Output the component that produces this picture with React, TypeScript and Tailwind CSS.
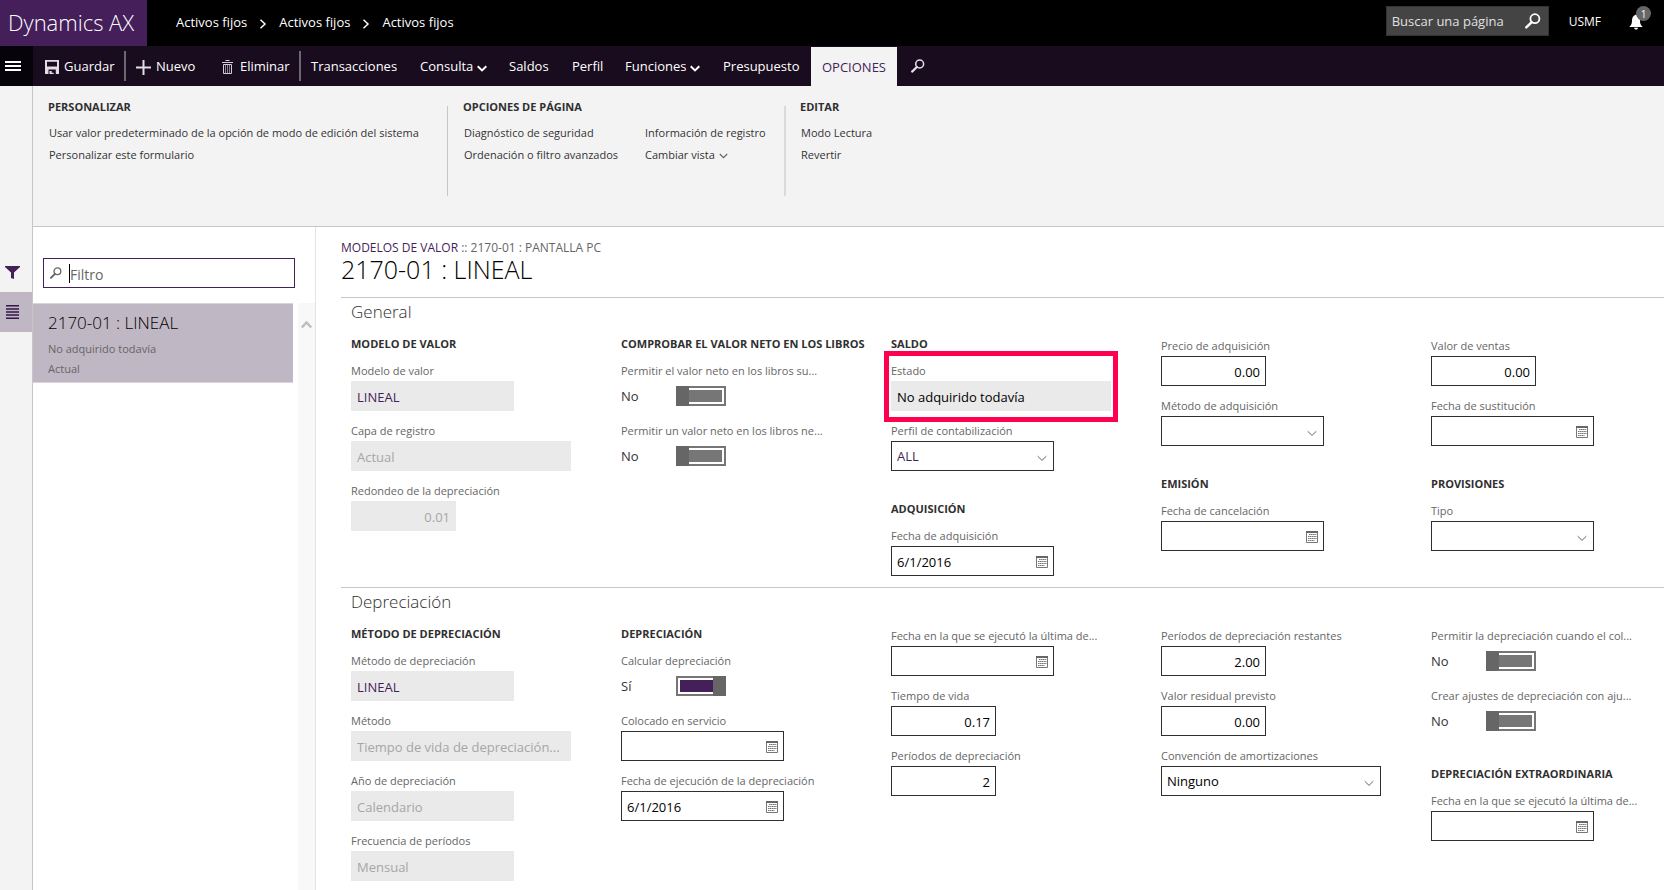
import { useId, useState, type ReactNode } from 'react';

const TITLE = '2170-01 : LINEAL';

/* ---------- icons ---------- */

function SearchIcon({ className = '' }: { className?: string }) {
  return (
    <svg viewBox="0 0 16 16" className={className} fill="none" stroke="currentColor" aria-hidden="true">
      <circle cx="9.9" cy="5.7" r="4.5" strokeWidth="1.8" />
      <path d="M6.7 9.2 1.3 14.4" strokeWidth="2.5" strokeLinecap="round" />
    </svg>
  );
}

function ChevronDown({ className = '', weight = 1 }: { className?: string; weight?: number }) {
  return (
    <svg viewBox="0 0 10 7" className={className} fill="none" stroke="currentColor" strokeWidth={weight} aria-hidden="true">
      <path d="M.7 1.2 5 5.4l4.3-4.2" />
    </svg>
  );
}

function CrumbChevron() {
  return (
    <svg viewBox="0 0 8 10" className="mt-0.5 h-[10px] w-2 shrink-0" fill="none" stroke="#fff" strokeWidth="1.5" aria-hidden="true">
      <path d="M1.5.8 6 5 1.5 9.2" />
    </svg>
  );
}

function CalendarIcon() {
  return (
    <svg viewBox="0 0 12 12" className="h-3 w-3" aria-hidden="true">
      <path d="M.5 1.5h11v10H.5z" fill="none" stroke="#767676" />
      <path d="M0 0h12v2H0z" fill="#666" />
      <path d="M3 3.5h7.500M2 5.500h8.500M2 7.500h8.500M2 9.500h6.500" stroke="#767676" strokeDasharray="1.500 .3" />
    </svg>
  );
}

function SaveIcon() {
  return (
    <svg viewBox="0 0 14 14" className="h-[14px] w-[14px]" aria-hidden="true">
      <path fillRule="evenodd" fill="#e3dde6" d="M0 0h14v14h-3.200V9.500H3.500V14H0zM2 1.800v4.700h10V1.800z" />
      <path d="M4.500 11h2.200v1.700h2V14H4.500z" fill="#e3dde6" />
    </svg>
  );
}

function PlusIcon() {
  return (
    <svg viewBox="0 0 15 15" className="h-[15px] w-[15px]" fill="none" stroke="#e3dde6" strokeWidth="2" aria-hidden="true">
      <path d="M7.5 0v15M0 7.5h15" />
    </svg>
  );
}

function TrashIcon() {
  return (
    <svg viewBox="0 0 11 14" className="mx-px h-[14px] w-[11px]" fill="none" stroke="#d5cdd9" aria-hidden="true">
      <path d="M3.500 .5h4M0 2.500h11M1.500 4.500h8v9h-8z" />
      <path d="M3.500 5v8M5.500 5v8M7.500 5v8" stroke="#8d8294" />
    </svg>
  );
}

function BellIcon() {
  return (
    <svg viewBox="0 0 14 16" className="h-4 w-[14px]" fill="#fff" aria-hidden="true">
      <path d="M7 .5C4.2 1.400 3 3.600 3 6.500c0 3.200-.8 4.900-2.800 6.500h13.600c-2-1.600-2.800-3.300-2.800-6.500C11 3.600 9.800 1.400 7 .5zM5 13.800h4.200c-.3 1.100-1.100 1.800-2.100 1.800S5.300 14.900 5 13.800z" />
    </svg>
  );
}

/* ---------- form parts ---------- */

type Size = 'sm' | 'md' | 'lg';

const widths: Record<Size, string> = {
  sm: 'w-[105px]',
  md: 'w-[163px]',
  lg: 'w-[220px]',
};

const frame = 'h-[30px] border border-[#2f2f2f] bg-white';

function Label({ id, children }: { id: string; children: ReactNode }) {
  return (
    <label htmlFor={id} className="block h-5 whitespace-nowrap text-[11px] leading-5 text-[#666]">
      {children}
    </label>
  );
}

interface FieldProps {
  label: string;
  value?: string;
  size?: Size;
  link?: boolean;
}

function ReadOnlyField({ label, value, size = 'md', link, right, strong }: FieldProps & { right?: boolean; strong?: boolean }) {
  const id = useId();
  const color = link ? 'text-[#441f5a]' : strong ? 'text-black' : 'text-[#a6a6a6]';
  return (
    <div>
      <Label id={id}>{label}</Label>
      <input
        id={id}
        readOnly
        value={value}
        className={`block h-[30px] bg-[#eaeaea] px-1.5 pt-0.5 text-[13px] outline-none ${widths[size]} ${color} ${right ? 'text-right' : ''}`}
      />
    </div>
  );
}

function NumberField({ label, value }: FieldProps) {
  const id = useId();
  return (
    <div>
      <Label id={id}>{label}</Label>
      <input
        id={id}
        defaultValue={value}
        inputMode="decimal"
        className={`block px-[5px] pt-0.5 text-right text-[13px] text-black outline-none ${frame} ${widths.sm}`}
      />
    </div>
  );
}

function DateField({ label, value = '' }: FieldProps) {
  const id = useId();
  return (
    <div>
      <Label id={id}>{label}</Label>
      <div className={`flex items-center ${frame} ${widths.md}`}>
        <input
          id={id}
          defaultValue={value}
          className="h-full min-w-0 flex-1 px-[5px] pt-0.5 text-[13px] text-black outline-none"
        />
        <button type="button" aria-label="Calendario" className="px-[5px] pt-0.5">
          <CalendarIcon />
        </button>
      </div>
    </div>
  );
}

function SelectField({ label, value = '', size = 'md', link }: FieldProps) {
  const id = useId();
  return (
    <div>
      <Label id={id}>{label}</Label>
      <div className={`relative ${widths[size]}`}>
        <select
          id={id}
          defaultValue={value}
          className={`block w-full appearance-none px-[5px] pt-0.5 text-[13px] outline-none ${frame} ${link ? 'text-[#441f5a]' : 'text-black'}`}
        >
          <option value={value}>{value}</option>
        </select>
        <ChevronDown className="pointer-events-none absolute right-[7px] top-[14px] h-[7px] w-[10px] text-[#666]" />
      </div>
    </div>
  );
}

function Toggle({ label, on = false }: { label: string; on?: boolean }) {
  const id = useId();
  const [checked, setChecked] = useState(on);
  return (
    <div className="h-[50px]">
      <Label id={id}>{label}</Label>
      <div className="flex h-[30px] items-center">
        <span className="w-[55px] pt-0.5 text-[13px] text-[#333]">{checked ? 'Sí' : 'No'}</span>
        <span className="relative flex">
          <input
            id={id}
            type="checkbox"
            role="switch"
            checked={checked}
            onChange={e => setChecked(e.target.checked)}
            className="h-5 w-[50px] appearance-none border-2 border-[#767676] bg-[#767676] bg-clip-content p-0.5 checked:bg-[#441f5a]"
          />
          <span
            className={`pointer-events-none absolute top-0 h-5 w-[13px] bg-[#666] ${checked ? 'right-0' : 'left-0'}`}
          />
        </span>
      </div>
    </div>
  );
}

function Column({ children }: { children: ReactNode }) {
  return <div className="flex w-[220px] flex-col gap-[30px]">{children}</div>;
}

function Group({ title, children }: { title?: string; children: ReactNode }) {
  return (
    <div>
      {title && (
        <h3 className="mb-[9px] whitespace-nowrap text-[11px] font-bold leading-4 text-[#2f2f2f]">{title}</h3>
      )}
      <div className="flex flex-col gap-[10px]">{children}</div>
    </div>
  );
}

function Section({ title, children }: { title: string; children: ReactNode }) {
  return (
    <section className="border-t border-[#c6c6c6] pl-[10px]">
      <h2 className="mb-[10px] text-[17px] font-light leading-7 text-[#2f2f2f]">{title}</h2>
      <div className="flex flex-wrap gap-x-[50px] gap-y-[30px] pb-[11px]">{children}</div>
    </section>
  );
}

/* ---------- page chrome ---------- */

function TopBar() {
  return (
    <header className="flex h-[46px] bg-black text-white">
      <a href="#inicio" className="flex w-[147px] shrink-0 items-center bg-[#441f5a] pb-0.5 pl-2 text-[22px] font-light">
        Dynamics AX
      </a>
      <nav aria-label="Ruta" className="flex items-center gap-3 whitespace-nowrap pl-[29px] text-[13px]">
        <a href="#modulo">Activos fijos</a>
        <CrumbChevron />
        <a href="#area">Activos fijos</a>
        <CrumbChevron />
        <a href="#pagina">Activos fijos</a>
      </nav>
      <div className="ml-auto flex items-start pr-[13px] pt-1.5">
        <div className="flex h-[30px] w-[163px] items-center border border-[#333] bg-[#444] pr-[7px]">
          <input
            aria-label="Buscar una página"
            placeholder="Buscar una página"
            className="min-w-0 flex-1 pl-[5px] pt-0.5 text-[13px] outline-none placeholder:text-[#e0e0e0]"
          />
          <button type="button" aria-label="Buscar">
            <SearchIcon className="h-4 w-4" />
          </button>
        </div>
        <button type="button" className="ml-5 h-8 text-[12px]">USMF</button>
        <button type="button" aria-label="Notificaciones" className="relative ml-7 mt-2 w-[22px]">
          <BellIcon />
          <span className="absolute -top-2 left-[7px] flex h-[15px] w-[15px] items-center justify-center rounded-full bg-[#666] text-[10px] leading-none">
            1
          </span>
        </button>
      </div>
    </header>
  );
}

function Separator() {
  return <span className="h-[30px] w-[2px] shrink-0 bg-[#6e6672]" />;
}

function ActionBar() {
  return (
    <div className="flex h-10 bg-[#190c1e] text-[13px] text-white">
      <button type="button" aria-label="Menú" className="flex w-[33px] shrink-0 flex-col justify-center gap-[2px] bg-[#07030a] pl-[5px]">
        <span className="h-[2px] w-4 bg-white" />
        <span className="h-[2px] w-4 bg-white" />
        <span className="h-[2px] w-4 bg-white" />
      </button>
      <div className="flex items-center whitespace-nowrap pl-3">
        <button type="button" className="flex w-[79px] items-center gap-[5px] pt-0.5">
          <SaveIcon />
          Guardar
        </button>
        <Separator />
        <button type="button" className="flex w-[95px] items-center gap-[5px] pl-[10px] pt-0.5">
          <PlusIcon />
          Nuevo
        </button>
        <button type="button" className="flex w-[78px] items-center gap-1.5 pt-0.5">
          <TrashIcon />
          Eliminar
        </button>
        <Separator />
        <button type="button" className="w-[119px] pl-[10px] pt-0.5 text-left">Transacciones</button>
        <button type="button" className="flex w-[89px] items-center gap-1 pt-0.5">
          Consulta
          <ChevronDown weight={2} className="mt-0.5 h-[7px] w-[10px]" />
        </button>
        <button type="button" className="w-[63px] pt-0.5 text-left">Saldos</button>
        <button type="button" className="w-[53px] pt-0.5 text-left">Perfil</button>
        <button type="button" className="flex w-[98px] items-center gap-1 pt-0.5">
          Funciones
          <ChevronDown weight={2} className="mt-0.5 h-[7px] w-[10px]" />
        </button>
        <button type="button" className="w-[88px] pt-0.5 text-left">Presupuesto</button>
        <button type="button" className="mt-px flex h-[39px] w-[86px] items-center justify-center bg-[#f3f3f3] pt-0.5 text-[#441f5a]">
          OPCIONES
        </button>
        <button type="button" aria-label="Buscar acción" className="pl-[14px]">
          <SearchIcon className="h-[14px] w-[14px] text-[#e3dde6]" />
        </button>
      </div>
    </div>
  );
}

function RibbonGroup({ title, children }: { title: string; children: ReactNode }) {
  return (
    <div>
      <h2 className="mb-[7px] text-[11px] font-bold leading-4 text-[#2f2f2f]">{title}</h2>
      <div className="flex gap-x-[22px] pl-px">{children}</div>
    </div>
  );
}

function Ribbon() {
  const col = 'flex min-w-[159px] flex-col items-start text-[11px] leading-[22px]';
  return (
    <div className="flex h-[141px] whitespace-nowrap border-b border-[#c6c6c6] bg-[#f3f3f3] pl-[15px] pt-[13px] text-[#333]">
      <div className="w-[399px]">
        <RibbonGroup title="PERSONALIZAR">
          <div className={col}>
            <button type="button">Usar valor predeterminado de la opción de modo de edición del sistema</button>
            <button type="button">Personalizar este formulario</button>
          </div>
        </RibbonGroup>
      </div>
      <div className="mt-[7px] h-[90px] w-px bg-[#c6c6c6]" />
      <div className="w-[336px] pl-[15px]">
        <RibbonGroup title="OPCIONES DE PÁGINA">
          <div className={col}>
            <button type="button">Diagnóstico de seguridad</button>
            <button type="button">Ordenación o filtro avanzados</button>
          </div>
          <div className={col}>
            <button type="button">Información de registro</button>
            <button type="button" className="flex items-center gap-1">
              Cambiar vista
              <ChevronDown weight={1.4} className="mt-0.5 h-[6px] w-[9px] text-[#666]" />
            </button>
          </div>
        </RibbonGroup>
      </div>
      <div className="mt-[7px] h-[90px] w-[2px] bg-[#dadada]" />
      <div className="pl-[14px]">
        <RibbonGroup title="EDITAR">
          <div className={col}>
            <button type="button">Modo Lectura</button>
            <button type="button">Revertir</button>
          </div>
        </RibbonGroup>
      </div>
    </div>
  );
}

function Rail() {
  return (
    <div className="w-[33px] shrink-0 border-r border-[#c6c6c6] bg-[#f3f3f3] pt-[170px]">
      <button type="button" aria-label="Filtro" className="flex h-9 w-full items-start pl-[5px] pt-[10px]">
        <svg viewBox="0 0 15 13" className="h-[13px] w-[15px]" fill="#441f5a" aria-hidden="true">
          <path d="M0 0h15v1L9 6.500V13L6 12V6.500L0 1z" />
        </svg>
      </button>
      <button type="button" aria-label="Lista" className="flex h-10 w-full items-center bg-[#c0b7c4] pl-1.5">
        <svg viewBox="0 0 13 14" className="h-[14px] w-[13px]" stroke="#32164a" strokeWidth="1.5" aria-hidden="true">
          <path d="M0 .8h13M0 3.900h13M0 7h13M0 10.100h13M0 13.200h13" />
        </svg>
      </button>
    </div>
  );
}

function ListPanel() {
  return (
    <aside className="flex w-[283px] shrink-0 flex-col border-r border-[#e4e4e4]">
      <div className="ml-[10px] mr-5 mt-[31px] flex h-[30px] items-center border border-[#441f5a] pl-1.5">
        <SearchIcon className="h-3 w-3 text-[#666]" />
        <span className="ml-[7px] h-[19px] w-px bg-black" />
        <input aria-label="Filtro" placeholder="Filtro" className="min-w-0 flex-1 pt-0.5 text-[14px] outline-none placeholder:text-[#666]" />
      </div>
      <div className="mt-[15px] flex flex-1">
        <div className="mr-[5px] flex-1">
          <a href="#registro" className="block h-20 border-y border-[#d9d4db] bg-[#c0b7c4] pl-[15px] pt-[5px] text-[11px] leading-5 text-[#666]">
            <span className="mb-[2px] block text-[17px] font-light leading-7 text-black">{TITLE}</span>
            <span className="block">No adquirido todavía</span>
            <span className="block">Actual</span>
          </a>
        </div>
        <div className="w-[17px] bg-[#f8f8f8] pl-[3px] pt-[17px]">
          <svg viewBox="0 0 11 9" className="h-[9px] w-[11px]" fill="none" stroke="#bdbdbd" strokeWidth="2.5" aria-hidden="true">
            <path d="M.8 7.500 5.500 2.500l4.700 5" />
          </svg>
        </div>
      </div>
    </aside>
  );
}

function Details() {
  return (
    <main className="min-w-0 flex-1 pl-[25px] pt-3">
      <p className="text-[12px] leading-[18px] text-[#666]">
        <a href="#modelos" className="text-[#441f5a]">MODELOS DE VALOR</a> :: 2170-01 : PANTALLA PC
      </p>
      <h1 className="mb-4 text-[25px] font-light leading-6 text-black">{TITLE}</h1>

      <Section title="General">
        <Column>
          <Group title="MODELO DE VALOR">
            <ReadOnlyField label="Modelo de valor" value="LINEAL" link />
            <ReadOnlyField label="Capa de registro" value="Actual" size="lg" />
            <ReadOnlyField label="Redondeo de la depreciación" value="0.01" size="sm" right />
          </Group>
        </Column>
        <Column>
          <Group title="COMPROBAR EL VALOR NETO EN LOS LIBROS">
            <Toggle label="Permitir el valor neto en los libros su..." />
            <Toggle label="Permitir un valor neto en los libros ne..." />
          </Group>
        </Column>
        <Column>
          <Group title="SALDO">
            <div className="relative">
              <ReadOnlyField label="Estado" value="No adquirido todavía" size="lg" strong />
              <div className="pointer-events-none absolute -inset-x-[7px] -bottom-[11px] -top-[10px] border-[5px] border-[#ff004f]" />
            </div>
            <SelectField label="Perfil de contabilización" value="ALL" link />
          </Group>
          <Group title="ADQUISICIÓN">
            <DateField label="Fecha de adquisición" value="6/1/2016" />
          </Group>
        </Column>
        <Column>
          <Group>
            <NumberField label="Precio de adquisición" value="0.00" />
            <SelectField label="Método de adquisición" />
          </Group>
          <Group title="EMISIÓN">
            <DateField label="Fecha de cancelación" />
          </Group>
        </Column>
        <Column>
          <Group>
            <NumberField label="Valor de ventas" value="0.00" />
            <DateField label="Fecha de sustitución" />
          </Group>
          <Group title="PROVISIONES">
            <SelectField label="Tipo" />
          </Group>
        </Column>
      </Section>

      <Section title="Depreciación">
        <Column>
          <Group title="MÉTODO DE DEPRECIACIÓN">
            <ReadOnlyField label="Método de depreciación" value="LINEAL" link />
            <ReadOnlyField label="Método" value="Tiempo de vida de depreciación..." size="lg" />
            <ReadOnlyField label="Año de depreciación" value="Calendario" />
            <ReadOnlyField label="Frecuencia de períodos" value="Mensual" />
          </Group>
        </Column>
        <Column>
          <Group title="DEPRECIACIÓN">
            <Toggle label="Calcular depreciación" on />
            <DateField label="Colocado en servicio" />
            <DateField label="Fecha de ejecución de la depreciación" value="6/1/2016" />
          </Group>
        </Column>
        <Column>
          <Group>
            <DateField label="Fecha en la que se ejecutó la última de..." />
            <NumberField label="Tiempo de vida" value="0.17" />
            <NumberField label="Períodos de depreciación" value="2" />
          </Group>
        </Column>
        <Column>
          <Group>
            <NumberField label="Períodos de depreciación restantes" value="2.00" />
            <NumberField label="Valor residual previsto" value="0.00" />
            <SelectField label="Convención de amortizaciones" value="Ninguno" size="lg" />
          </Group>
        </Column>
        <Column>
          <Group>
            <Toggle label="Permitir la depreciación cuando el col..." />
            <Toggle label="Crear ajustes de depreciación con aju..." />
          </Group>
          <Group title="DEPRECIACIÓN EXTRAORDINARIA">
            <DateField label="Fecha en la que se ejecutó la última de..." />
          </Group>
        </Column>
      </Section>
    </main>
  );
}

export default function App() {
  return (
    <div className="flex min-h-screen flex-col bg-white font-['Open_Sans','Noto_Sans',sans-serif]">
      <TopBar />
      <ActionBar />
      <div className="flex flex-1">
        <Rail />
        <div className="flex min-w-0 flex-1 flex-col">
          <Ribbon />
          <div className="flex flex-1">
            <ListPanel />
            <Details />
          </div>
        </div>
      </div>
    </div>
  );
}
